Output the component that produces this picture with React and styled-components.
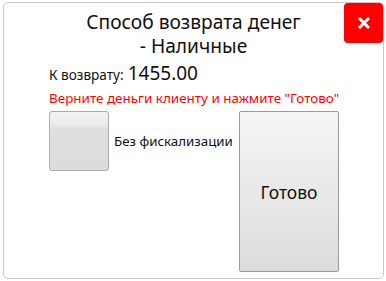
import React from "react";
import styled, { createGlobalStyle } from "styled-components";

const Global = createGlobalStyle`
  html, body { margin: 0; padding: 0; background: #ffffff; }
  body { font-family: "Noto Sans", "Open Sans", sans-serif; color: #111; }
`;

const Dialog = styled.div`
  position: relative;
  box-sizing: border-box;
  margin: 2px 0 0 3px;
  width: 381px;
  height: 277px;
  border: 1px solid #c9c9c9;
  border-radius: 5px;
  background: #fff;
  padding: 7px 0 0 0;
`;

const Title = styled.h1`
  margin: 0;
  font-weight: 400;
  font-size: 19.2px;
  line-height: 24px;
  text-align: center;
  color: #111;
`;

const TitleLine = styled.span`
  display: block;
`;

const CloseButton = styled.button`
  position: absolute;
  top: 0;
  right: 0;
  width: 39px;
  height: 40px;
  border: none;
  border-radius: 4px;
  background: #ff0000;
  display: flex;
  align-items: center;
  justify-content: center;
  padding: 0;
  cursor: pointer;
`;

const Content = styled.div`
  width: 290px;
  margin: 0 auto;
  padding-left: 1px;
`;

const AmountRow = styled.div`
  margin-top: 3px;
  display: flex;
  align-items: baseline;
  gap: 4px;
  line-height: 24px;
`;

const AmountLabel = styled.span`
  font-size: 13.6px;
  color: #111;
`;

const AmountValue = styled.span`
  font-size: 19px;
  color: #111;
`;

const Warning = styled.div`
  margin-top: 2px;
  font-size: 13.45px;
  line-height: 18px;
  color: #ff0000;
  white-space: nowrap;
`;

const Actions = styled.div`
  margin-top: 4px;
  display: flex;
  align-items: flex-start;
`;

const OptionGroup = styled.label`
  display: flex;
  align-items: center;
  gap: 5px;
`;

const GrayButton = styled.button`
  box-sizing: border-box;
  flex: none;
  width: ${(p) => p.$w}px;
  height: ${(p) => p.$h}px;
  border: 1px solid ${(p) => (p.$dark ? "#9a9a9a" : "#ababab")};
  border-radius: ${(p) => p.$r}px;
  background: linear-gradient(to bottom, #f3f3f3 0%, #ececec 20%, #dedede 30%, #dcdcdc 100%);
  padding: 0;
  font-family: inherit;
  font-size: 17.5px;
  color: #111;
  cursor: pointer;
`;

const BigButton = styled(GrayButton)`
  margin-left: auto;
  background: linear-gradient(to bottom, #f5f5f5 0%, #dcdcdc 100%);
`;

const OptionText = styled.span`
  font-size: 13.3px;
  color: #111;
  white-space: nowrap;
`;

function CloseIcon() {
  return (
    <svg width="12" height="12" viewBox="0 0 12 12">
      <path d="M2 2 L10 10 M10 2 L2 10" stroke="#fff" strokeWidth="3" strokeLinecap="square" />
    </svg>
  );
}

export default function App() {
  return (
    <>
      <Global />
      <Dialog>
        <Title>
          <TitleLine>Способ возврата денег</TitleLine>
          <TitleLine>- Наличные</TitleLine>
        </Title>
        <CloseButton aria-label="Закрыть">
          <CloseIcon />
        </CloseButton>
        <Content>
          <AmountRow>
            <AmountLabel>К возврату:</AmountLabel>
            <AmountValue>1455.00</AmountValue>
          </AmountRow>
          <Warning>Верните деньги клиенту и нажмите "Готово"</Warning>
          <Actions>
            <OptionGroup>
              <GrayButton $w={60} $h={60} $r={3} />
              <OptionText>Без фискализации</OptionText>
            </OptionGroup>
            <BigButton $w={100} $h={161} $r={2} $dark>
              Готово
            </BigButton>
          </Actions>
        </Content>
      </Dialog>
    </>
  );
}
